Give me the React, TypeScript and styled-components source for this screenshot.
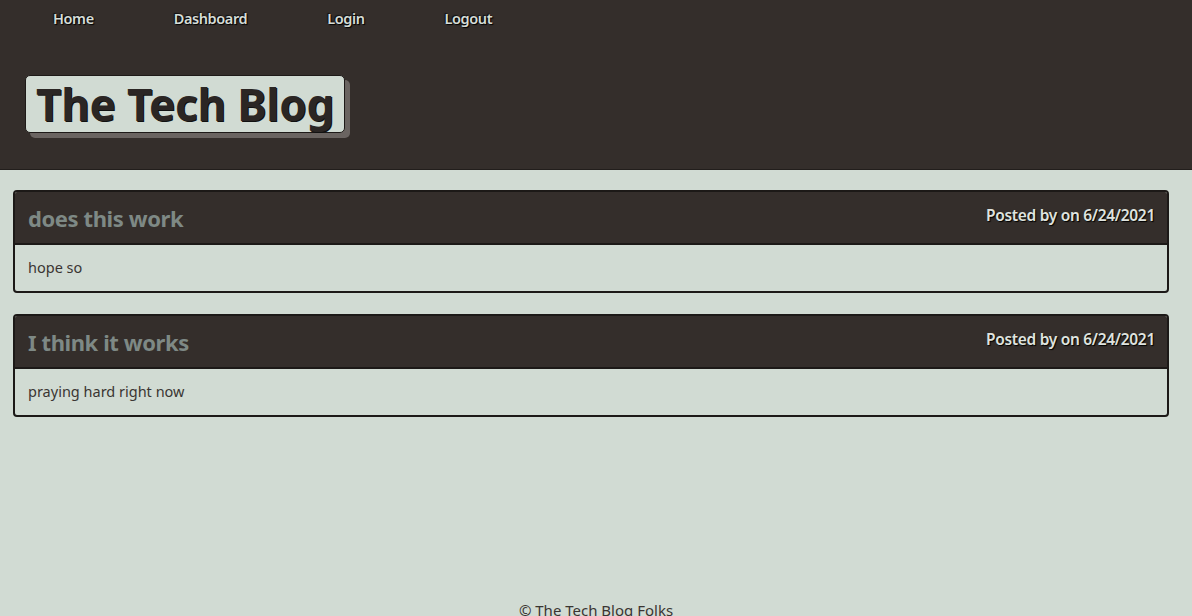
import React from "react";
import styled, { createGlobalStyle } from "styled-components";

const Global = createGlobalStyle`
  html, body { margin: 0; padding: 0; }
  body {
    background: #d1dbd3;
    font-family: "Noto Sans", "Open Sans", sans-serif;
    color: #2f2a27;
  }
`;

const Page = styled.div`
  min-height: 616px;
  display: flex;
  flex-direction: column;
`;

const Header = styled.header`
  background: #342e2b;
  height: 170px;
  box-sizing: border-box;
  border-bottom: 1px solid #221e1c;
  padding: 0 0 0 25px;
  display: flex;
  flex-direction: column;
`;

const Nav = styled.nav`
  display: flex;
  gap: 80px;
  padding: 8px 0 0 28px;
  height: 75px;
  box-sizing: border-box;
`;

const NavLink = styled.a`
  font-size: 14.5px;
  font-weight: 600;
  color: #d6ddd7;
  text-decoration: none;
  letter-spacing: -0.4px;
  text-shadow: 1px 1px 1px #000, -1px -1px 1px #111;
  line-height: 20px;
`;

const TitleBox = styled.div`
  align-self: flex-start;
  background: #d1dbd3;
  border: 1px solid #1e1a18;
  border-radius: 5px;
  box-shadow: 5px 5px 0 #6a6461;
  padding: 3px 10px 3px 10px;
  height: 58px;
  box-sizing: border-box;
  display: flex;
  align-items: center;
`;

const Title = styled.h1`
  margin: 0;
  font-size: 44px;
  font-weight: 700;
  color: #2b2624;
  letter-spacing: -0.2px;
  line-height: 1;
  text-shadow: 1px 1px 0 #111;
`;

const Main = styled.main`
  flex: 1;
  padding: 20px 23px 0 13px;
  display: flex;
  flex-direction: column;
  gap: 21px;
`;

const Card = styled.section`
  border: 2px solid #1c1917;
  border-radius: 4px;
  overflow: hidden;
  background: #d1dbd3;
`;

const CardHead = styled.div`
  background: #342e2b;
  height: 51px;
  border-bottom: 2px solid #1c1917;
  display: flex;
  align-items: center;
  justify-content: space-between;
  padding: 0 12px 0 13px;
`;

const CardTitle = styled.h2`
  margin: 0;
  font-size: 22px;
  font-weight: 700;
  color: #7e8985;
  letter-spacing: -0.4px;
`;

const Meta = styled.span`
  font-size: 15.5px;
  font-weight: 600;
  color: #dfe3df;
  letter-spacing: -0.3px;
  margin-top: -5px;
  text-shadow: 1px 1px 1px #000;
`;

const CardBody = styled.div`
  padding: 12px 13px 14px;
  font-size: 14.5px;
  color: #3a3532;
  height: 46px;
  box-sizing: border-box;
`;

const Footer = styled.footer`
  text-align: center;
  font-size: 15px;
  color: #3a3532;
  height: 16px;
  overflow: visible;
  line-height: 20px;
  padding-top: 2px;
`;

const posts = [
  { title: "does this work", body: "hope so", date: "6/24/2021" },
  { title: "I think it works", body: "praying hard right now", date: "6/24/2021" },
];

export default function App() {
  return (
    <Page>
      <Global />
      <Header>
        <Nav>
          <NavLink href="#">Home</NavLink>
          <NavLink href="#">Dashboard</NavLink>
          <NavLink href="#">Login</NavLink>
          <NavLink href="#">Logout</NavLink>
        </Nav>
        <TitleBox>
          <Title>The Tech Blog</Title>
        </TitleBox>
      </Header>
      <Main>
        {posts.map((p) => (
          <Card key={p.title}>
            <CardHead>
              <CardTitle>{p.title}</CardTitle>
              <Meta>Posted by on {p.date}</Meta>
            </CardHead>
            <CardBody>{p.body}</CardBody>
          </Card>
        ))}
      </Main>
      <Footer>© The Tech Blog Folks</Footer>
    </Page>
  );
}
